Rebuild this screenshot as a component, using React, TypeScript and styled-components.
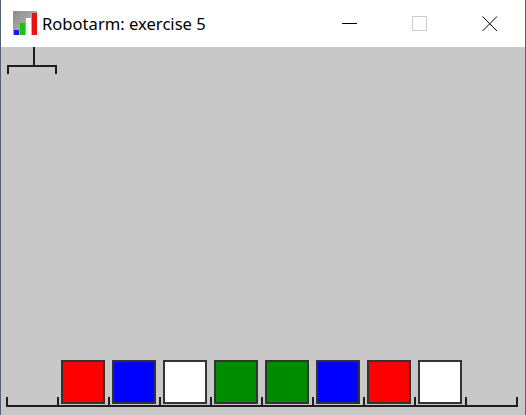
import * as React from 'react';
import styled, { createGlobalStyle } from 'styled-components';

const GlobalStyle = createGlobalStyle`
  html, body {
    margin: 0;
    padding: 0;
    background: #c8c8c8;
  }
`

const Window = styled.div`
  width: 526px;
  height: 415px;
  box-sizing: border-box;
  display: flex;
  flex-direction: column;
  border-left: 1px solid #536170;
  border-right: 1px solid #536170;
  overflow: hidden;
`

const TitleBar = styled.div`
  height: 47px;
  flex: none;
  background: #fff;
  display: flex;
  align-items: center;
`

const AppIcon = styled.div`
  width: 24px;
  height: 24px;
  margin-left: 12px;
  margin-top: -1px;
  display: flex;
`

const Title = styled.span`
  margin-left: 5px;
  font-family: "Noto Sans", "Open Sans", sans-serif;
  font-size: 16.6px;
  color: #000;
  flex: 1;
`

const CaptionButton = styled.div`
  width: 70px;
  height: 47px;
  display: flex;
  align-items: center;
  justify-content: center;
`

const Canvas = styled.div`
  flex: 1;
  background: #c8c8c8;
  display: flex;
  flex-direction: column;
  justify-content: space-between;
  padding-bottom: 8px;
`

const Gripper = styled.div`
  width: 50px;
  margin-left: 6px;
  display: flex;
  flex-direction: column;
  align-items: center;
`

const Arm = styled.div`
  width: 2px;
  height: 18px;
  margin-left: 3px;
  background: #1e1e1e;
`

const Claw = styled.div`
  align-self: stretch;
  height: 7px;
  border: 2px solid #1e1e1e;
  border-bottom: none;
`

const Floor = styled.div`
  display: flex;
  align-items: flex-end;
  margin-left: 5px;
  width: 512px;
  border-bottom: 2px solid #1e1e1e;
  background: linear-gradient(#1e1e1e, #1e1e1e) right bottom / 2px 8px no-repeat;
`

const Slot = styled.div`
  width: 51px;
  height: 46px;
  box-sizing: border-box;
  padding-left: 4px;
  display: flex;
  align-items: flex-end;
  background: linear-gradient(#1e1e1e, #1e1e1e) left bottom / 2px 8px no-repeat;
`

const Block = styled.div<{ $color: string }>`
  width: 44px;
  height: 44px;
  box-sizing: border-box;
  border: 2px solid #333;
  background: ${p => p.$color};
  margin-bottom: 1px;
`

const slots: (string | null)[] = [
  null, '#ff0000', '#0000ff', '#ffffff', '#008c00', '#008c00', '#0000ff', '#ff0000', '#ffffff', null
];

export default function App() {
  return (
    <>
      <GlobalStyle />
      <Window>
        <TitleBar>
          <AppIcon>
            <svg width="24" height="24" viewBox="0 0 24 24">
              <defs>
                <linearGradient id="ig" x1="0" y1="0" x2="1" y2="1">
                  <stop offset="0" stopColor="#8a8a8a" />
                  <stop offset="1" stopColor="#c4c4c4" />
                </linearGradient>
              </defs>
              <rect width="24" height="24" fill="url(#ig)" />
              <rect x="1" y="19" width="5" height="5" fill="#1b1bff" />
              <rect x="7" y="12" width="5" height="12" fill="#11c511" />
              <rect x="13" y="7" width="5" height="17" fill="#ffffff" />
              <rect x="19" y="2" width="5" height="22" fill="#ee1111" />
            </svg>
          </AppIcon>
          <Title>Robotarm: exercise 5</Title>
          <CaptionButton>
            <svg width="16" height="16" viewBox="0 0 16 16">
              <line x1="0" y1="7.5" x2="15" y2="7.5" stroke="#000" strokeWidth="1" />
            </svg>
          </CaptionButton>
          <CaptionButton>
            <svg width="16" height="16" viewBox="0 0 16 16">
              <rect x="0.5" y="0.5" width="14" height="14" fill="none" stroke="#cccccc" strokeWidth="1" />
            </svg>
          </CaptionButton>
          <CaptionButton>
            <svg width="16" height="16" viewBox="0 0 16 16">
              <path d="M0.5 0.5 L15 15 M15 0.5 L0.5 15" stroke="#000" strokeWidth="1" />
            </svg>
          </CaptionButton>
        </TitleBar>
        <Canvas>
          <Gripper>
            <Arm />
            <Claw />
          </Gripper>
          <Floor>
            {slots.map((c, i) => (
              <Slot key={i}>{c && <Block $color={c} />}</Slot>
            ))}
          </Floor>
        </Canvas>
      </Window>
    </>
  );
}
